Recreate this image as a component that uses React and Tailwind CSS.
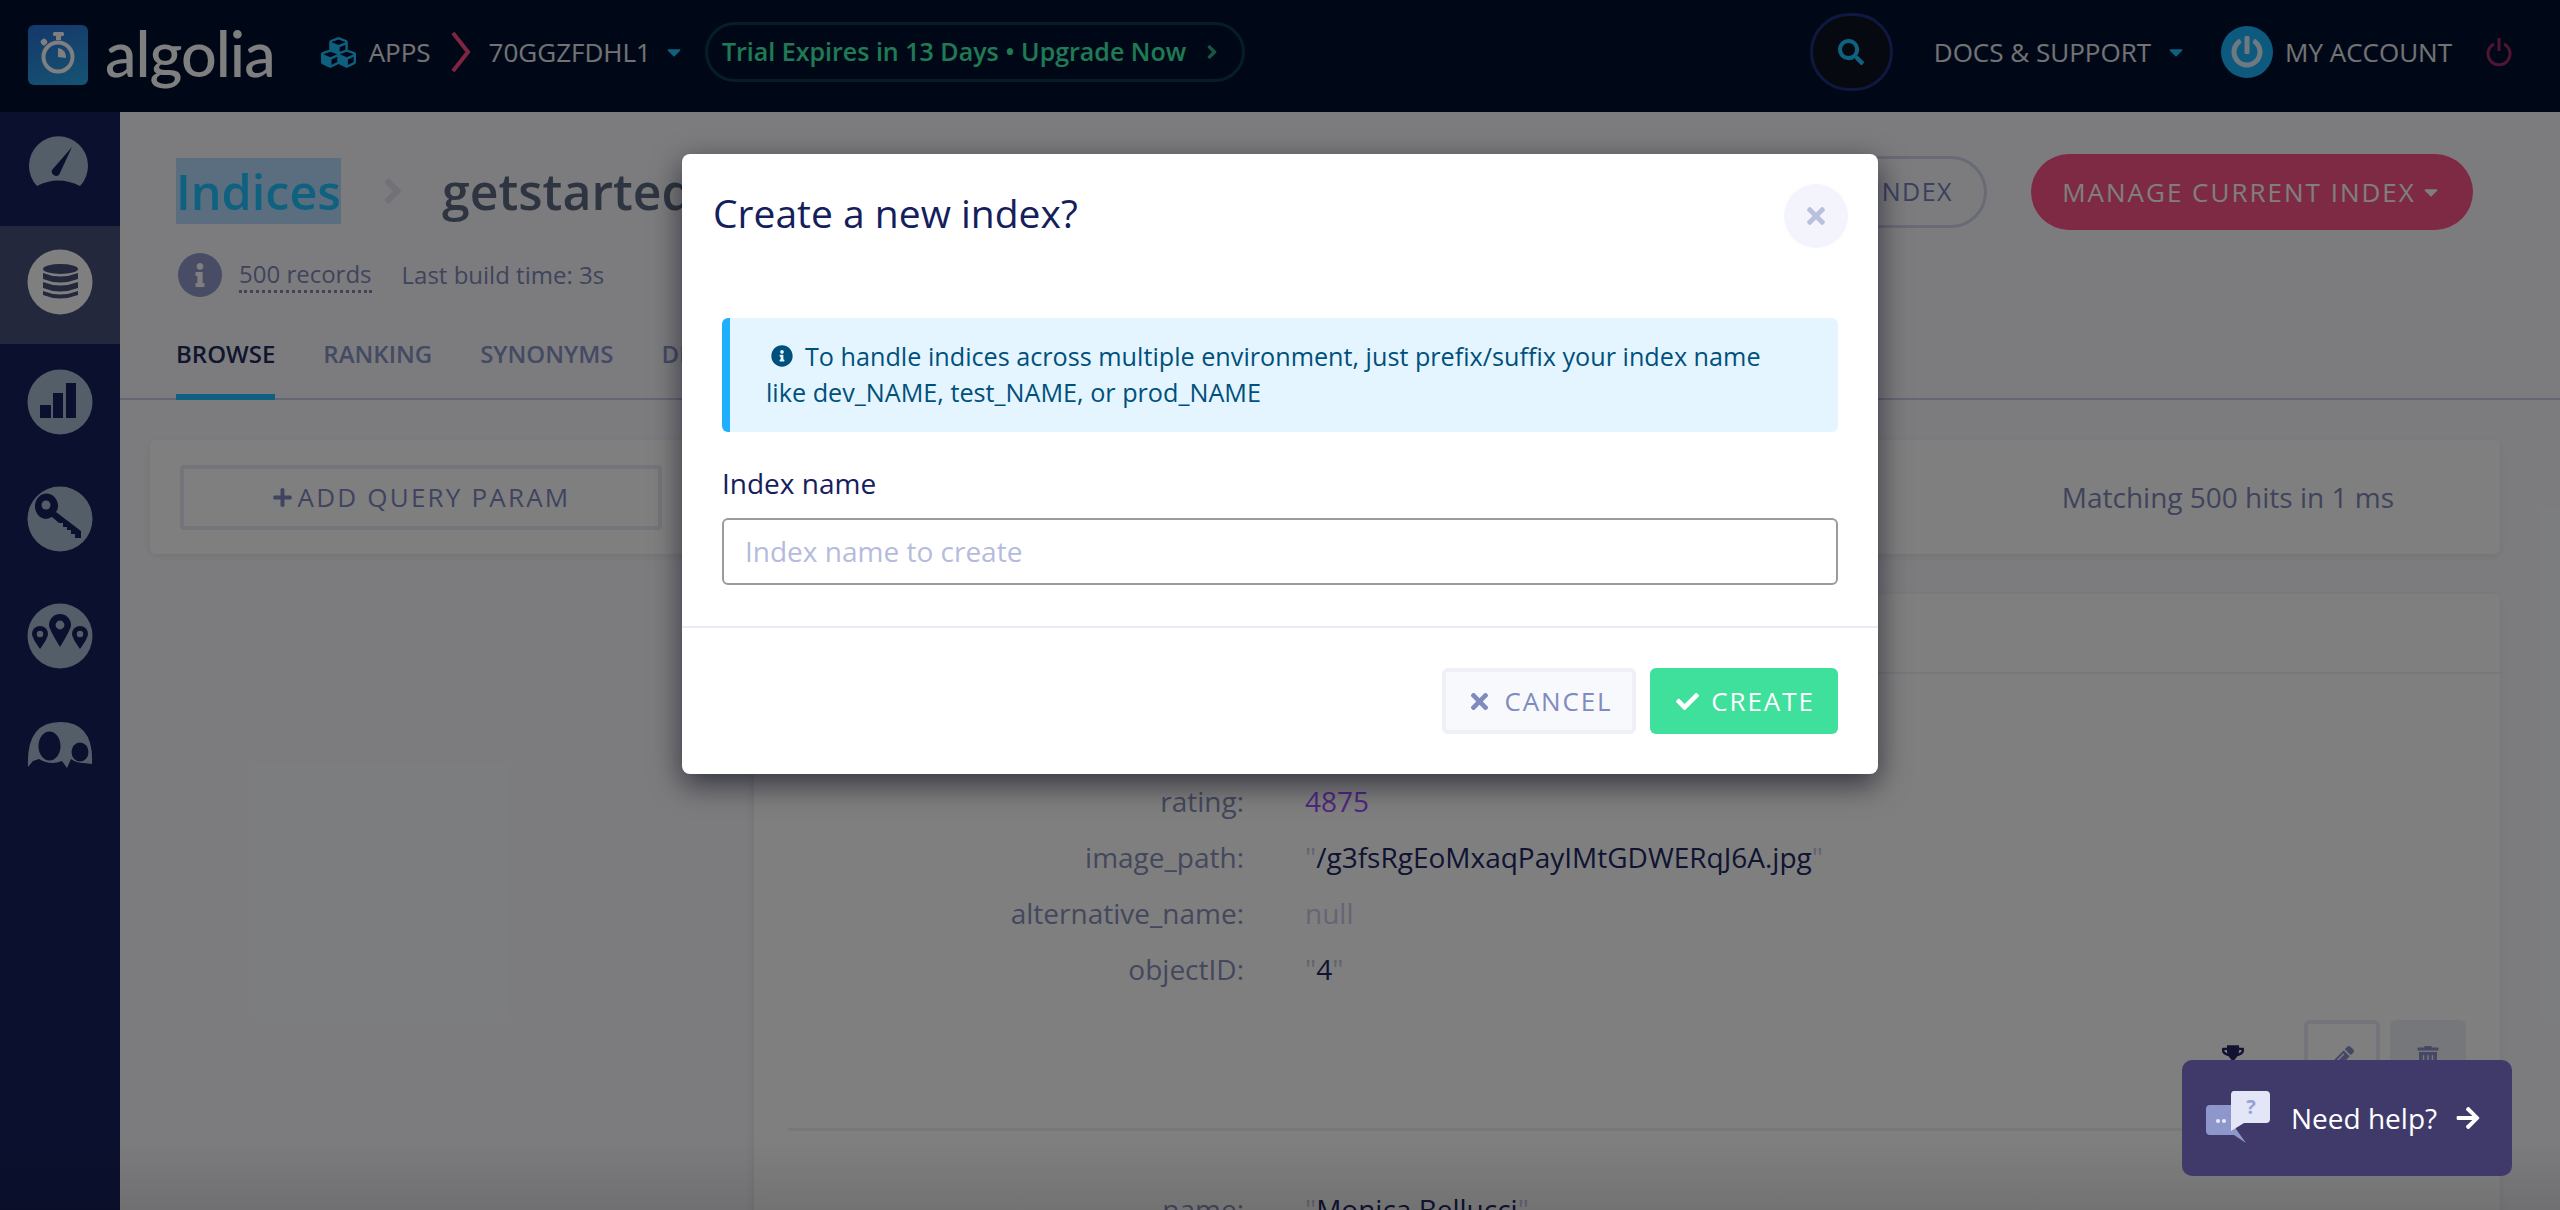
import React from "react";
import { FaCheck, FaTimes, FaPlus, FaInfoCircle, FaInfo, FaCubes, FaSearch, FaTrophy, FaPencilAlt, FaTrashAlt, FaCaretDown, FaAngleRight, FaArrowRight, FaPowerOff } from "react-icons/fa";

const ICON = "#a9bdd0";
const DARK = "#16205c";

function Gauge() {
  return (
    <svg width="64" height="54" viewBox="27 134 64 54" className="block">
      <path d="M37 186 A 29.5 29.5 0 1 1 80 186 Q 58 175 37 186 Z" fill={ICON} />
      <path d="M72 147 L59 175 A 4.5 4.5 0 0 1 52 170 Z" fill={DARK} />
    </svg>
  );
}
function Db() {
  const c = "#485078";
  return (
    <svg width="66" height="66" viewBox="27 249 66 66" className="block">
      <circle cx="60" cy="282" r="32.5" fill="#fff" />
      <ellipse cx="60.5" cy="269" rx="17.5" ry="5" fill={c} />
      <path d="M43 273 Q60 280 78 273 V279 Q60 286 43 279 Z" fill={c} />
      <path d="M43 282 Q60 289 78 282 V288 Q60 295 43 288 Z" fill={c} />
      <path d="M43 291 Q60 298 78 291 V295 Q60 302 43 295 Z" fill={c} />
    </svg>
  );
}
function Bars() {
  return (
    <svg width="66" height="66" viewBox="27 367 66 66" className="block">
      <circle cx="60" cy="400" r="32.5" fill={ICON} />
      <rect x="40" y="403" width="11" height="13" fill={DARK} />
      <rect x="53" y="391" width="10" height="25" fill={DARK} />
      <rect x="66" y="381" width="10" height="35" fill={DARK} />
    </svg>
  );
}
function Key() {
  return (
    <svg width="66" height="66" viewBox="27 485 66 66" className="block">
      <ellipse cx="60" cy="518" rx="32.5" ry="32.5" fill={ICON} />
      <path d="M35 505 A 11.5 12.5 0 0 1 58 505 Q 58 509 56 511 L 81 530 L 81 537 L 75 537 L 75 533 L 71 533 L 71 529 L 67 529 L 67 526 L 63 526 L 63 522 L 59 522 L 52 516 Q 48 518 45 518 A 11.5 12.5 0 0 1 35 505 Z" fill={DARK} />
      <circle cx="46" cy="504" r="4.5" fill={ICON} />
    </svg>
  );
}
function Pin({ x, top, tip, r }) {
  const cy = top + r;
  return (
    <g>
      <path d={`M${x - r} ${cy} A ${r} ${r} 0 1 1 ${x + r} ${cy} Q ${x + r} ${cy + 4} ${x} ${tip} Q ${x - r} ${cy + 4} ${x - r} ${cy} Z`} fill={DARK} />
      <circle cx={x} cy={cy} r={r * 0.4} fill={ICON} />
    </g>
  );
}
function Pins() {
  return (
    <svg width="66" height="66" viewBox="27 601 66 66" className="block">
      <circle cx="60" cy="634" r="32.5" fill={ICON} />
      <Pin x={60} top={612} tip={645} r={11} />
      <Pin x={40} top={624} tip={647} r={8} />
      <Pin x={80} top={624} tip={647} r={8} />
    </svg>
  );
}
function Users() {
  return (
    <svg width="66" height="47" viewBox="27 717 66 47" className="block">
      <path d="M28 763 Q26 718 60 718 Q94 718 92 760 L84 759 Q76 759 71 755 L67 764 L62 757 Q50 762 39 755 L33 757 Z" fill={ICON} />
      <ellipse cx="49.5" cy="742" rx="11" ry="14.5" fill={DARK} />
      <ellipse cx="80" cy="748" rx="8.5" ry="9.5" fill={DARK} />
    </svg>
  );
}
function Stopwatch() {
  return (
    <svg width="60" height="60" viewBox="0 0 60 60" className="block">
      <rect x="25" y="7" width="11" height="4" rx="1.5" fill="#fff" />
      <rect x="28" y="10" width="5" height="5" fill="#fff" />
      <circle cx="30" cy="32" r="14.5" fill="none" stroke="#fff" strokeWidth="4" />
      <rect x="13" y="14" width="6" height="6" rx="2" fill="#fff" transform="rotate(-40 16 17)" />
      <path d="M30 23 A 9 9 0 0 1 38 33 L30 32 Z" fill="#fff" />
    </svg>
  );
}

function Rows({ rows }) {
  return (
    <div className="flex flex-col gap-[20px]">
      {rows.map(([k, v]) => (
        <div key={k} className="flex h-[36px] items-center text-[28px] leading-[36px]">
          <div className="w-[490px] text-right text-[#8890b8]">{k}</div>
          <div className="ml-[61px] whitespace-nowrap">{v}</div>
        </div>
      ))}
    </div>
  );
}
const Q = () => <span className="text-[#c4c8de]">"</span>;
const Str = ({ s }) => (
  <span className="text-[#202864]">
    <Q />
    {s}
    <Q />
  </span>
);

export default function App() {
  return (
    <div className="relative h-[1210px] w-[2560px] overflow-hidden bg-[#f8f9fd] font-['Open_Sans',sans-serif]">
      {/* top bar */}
      <header className="flex h-[112px] items-center bg-[#001130] pb-[8px] text-[26px] text-white">
        <div className="ml-[28px] mt-[6px] flex h-[60px] w-[60px] items-center justify-center rounded-[6px] bg-[linear-gradient(160deg,#2b6fd6,#2aa8e6)]">
          <Stopwatch />
        </div>
        <span className="ml-[17px] font-['Lato',sans-serif] text-[63px] font-medium leading-none tracking-[-1px] text-white">algolia</span>
        <FaCubes className="ml-[46px] text-[#1ebefe]" size={35} />
        <span className="ml-[13px] text-white/90">APPS</span>
        <svg width="24" height="44" viewBox="0 0 24 44" className="ml-[18px]">
          <path d="M4 3 L19 22 L4 41" fill="none" stroke="#ff4a80" strokeWidth="4" />
        </svg>
        <span className="ml-[16px] text-white/90">70GGZFDHL1</span>
        <FaCaretDown className="ml-[12px] text-[#1ebefe]" size={22} />
        <div className="ml-[20px] flex h-[60px] w-[540px] items-center rounded-full border-[3px] border-[#3ee6a0]/20 pl-[14px] text-[25px] font-semibold text-[#3ef4aa]">
          <span className="whitespace-nowrap">Trial Expires in 13 Days • Upgrade Now</span>
          <FaAngleRight className="ml-[15px] opacity-70" size={22} />
        </div>
        <div className="ml-auto flex items-center">
          <div className="flex h-[78px] w-[83px] items-center justify-center rounded-full border-[3px] border-[#1c3080] bg-[#0c1420]">
            <FaSearch className="text-[#20c0ff]" size={26} />
          </div>
          <span className="ml-[41px] whitespace-nowrap text-white/90">DOCS &amp; SUPPORT</span>
          <FaCaretDown className="ml-[14px] text-[#1ebefe]" size={22} />
          <div className="ml-[34px] flex h-[52px] w-[52px] items-center justify-center rounded-full bg-[#1cb4ff]">
            <FaPowerOff className="text-white/85" size={32} />
          </div>
          <span className="ml-[12px] whitespace-nowrap text-white/90">MY ACCOUNT</span>
          <svg width="26" height="30" viewBox="0 0 26 30" fill="none" className="ml-[34px] mr-[48px]">
            <path d="M8 7 A 11 11 0 1 0 18 7" stroke="#a02a60" strokeWidth="3" />
            <path d="M13 1 V14" stroke="#a02a60" strokeWidth="3" />
          </svg>
        </div>
      </header>

      <div className="flex h-[1098px]">
        {/* sidebar */}
        <aside className="flex w-[120px] shrink-0 flex-col bg-[#16205c]">
          <div className="flex h-[114px] items-start justify-center pt-[22px] pr-[2px]"><Gauge /></div>
          <div className="flex h-[118px] items-center justify-center bg-[#485078] pb-[6px]"><Db /></div>
          <div className="flex h-[116px] items-center justify-center"><Bars /></div>
          <div className="flex h-[118px] items-center justify-center"><Key /></div>
          <div className="flex h-[116px] items-center justify-center"><Pins /></div>
          <div className="flex h-[118px] items-center justify-center pb-[18px]"><Users /></div>
        </aside>

        <main className="min-w-0 flex-1">
          {/* page head */}
          <div className="relative h-[288px] border-b-2 border-[#c8cceb]">
            <div className="flex items-start justify-between pl-[56px] pr-[87px] pt-[46px]">
              <div className="flex items-center">
                <span className="flex h-[66px] items-center bg-[#b4dcff] text-[48.5px] font-semibold leading-[66px] text-[#1ec4ff]">Indices</span>
                <FaAngleRight className="ml-[32px] text-[#e0e4f0]" size={40} />
                <span className="ml-[29px] whitespace-nowrap text-[50px] font-semibold leading-[66px] text-[#5c6a80]">getstarted_actors</span>
              </div>
              <div className="-mt-[4px] flex items-center gap-[44px]">
                <div className="flex h-[72px] items-center rounded-full border-[3px] border-[#d0d4ec] pl-[32px] pr-[31px] text-[25px] tracking-[1.5px] text-[#7480c0]">NEW INDEX</div>
                <div className="flex h-[76px] w-[442px] items-center justify-center rounded-full bg-[#fe5488] text-[26px] tracking-[2px] text-white">
                  MANAGE CURRENT INDEX
                  <FaCaretDown className="ml-[4px]" size={22} />
                </div>
              </div>
            </div>
            <div className="mt-[23px] flex items-center pl-[58px] text-[24px] text-[#7f88b8]">
              <span className="flex h-[44px] w-[44px] items-center justify-center rounded-full bg-[#9098c8]">
                <FaInfo className="text-white" size={24} />
              </span>
              <span className="ml-[17px] border-b-[3px] border-dotted border-[#7f88b8] leading-[32px]">500 records</span>
              <span className="ml-[30px]">Last build time: 3s</span>
            </div>
            <div className="absolute bottom-[-2px] left-[56px] flex items-center gap-[48px] text-[24px] font-semibold text-[#8894c8]">
              <span className="border-b-[6px] border-[#20c0ff] pb-[22px] text-[#242a5e]">BROWSE</span>
              <span className="pb-[28px]">RANKING</span>
              <span className="pb-[28px]">SYNONYMS</span>
              <span className="pb-[28px]">DISPLAY</span>
            </div>
          </div>

          {/* query card */}
          <div className="ml-[30px] mt-[40px] flex h-[114px] w-[2350px] items-center justify-between rounded-[6px] bg-white pl-[30px] pr-[106px] shadow-[0_2px_8px_rgba(0,0,0,0.08)]">
            <div className="flex h-[65px] w-[482px] items-center justify-center rounded-[4px] border-[4px] border-[#e8eaf4] text-[26px] tracking-[2.2px] text-[#7f88c0]">
              <FaPlus size={21} className="mr-[5px]" />
              ADD QUERY PARAM
            </div>
            <span className="text-[28px] text-[#7f88b8]">Matching 500 hits in 1 ms</span>
          </div>

          {/* hits card */}
          <div className="ml-[632px] mt-[40px] h-[800px] w-[1748px] rounded-[6px] border-l-2 border-[#eceef4] bg-white shadow-[0_2px_8px_rgba(0,0,0,0.08)]">
            <div className="h-[80px] border-b-2 border-[#eef0f8]" />
            <div className="pt-[109px]">
              <Rows
                rows={[
                  ["rating:", <span className="text-[#a050ff]">4875</span>],
                  ["image_path:", <Str s="/g3fsRgEoMxaqPayIMtGDWERqJ6A.jpg" />],
                  ["alternative_name:", <span className="text-[#c8cce6]">null</span>],
                  ["objectID:", <Str s="4" />],
                ]}
              />
            </div>
            <div className="relative mt-[33px] flex h-[76px] items-center justify-end pr-[34px]">
              <FaTrophy className="mb-[6px] mr-[60px] text-[#202864]" size={22} />
              <div className="mr-[10px] flex h-[76px] w-[76px] items-center justify-center rounded-[6px] border-[4px] border-[#e8eaf4]">
                <FaPencilAlt className="text-[#8890c8]" size={24} />
              </div>
              <div className="flex h-[76px] w-[76px] items-center justify-center rounded-[6px] bg-[#eceef6]">
                <FaTrashAlt className="text-[#8890c8]" size={24} />
              </div>
            </div>
            <div className="ml-[34px] mt-[32px] border-t-[3px] border-[#f0f1f6] pt-[60px]">
              <div className="-ml-[34px]">
                <Rows rows={[["name:", <Str s="Monica Bellucci" />]]} />
              </div>
            </div>
          </div>
        </main>
      </div>

      {/* overlay and modal */}
      <div className="absolute inset-0 flex justify-center bg-black/50 pt-[154px]">
        <div className="absolute bottom-0 left-0 h-[70px] w-full bg-gradient-to-b from-transparent to-black/10" />
        <div className="relative h-[620px] w-[1196px] rounded-[8px] bg-white shadow-[0_10px_30px_rgba(0,0,20,0.6)]">
          <div className="flex h-[156px] items-start justify-between pl-[31px] pr-[30px] pt-[30px]">
            <h2 className="text-[39px] leading-[58px] text-[#14205c]">Create a new index?</h2>
            <button className="flex h-[64px] w-[64px] items-center justify-center rounded-full bg-[#f4f5fc] text-[#b9c0de]">
              <FaTimes size={26} />
            </button>
          </div>
          <div className="mx-[40px] mt-[8px] flex h-[114px] flex-col justify-center rounded-[6px] border-l-[8px] border-[#1eb0ff] bg-[#e5f5ff] pb-[2px] pl-[36px] text-[25.2px] leading-[36px] text-[#00507c]">
            <div className="flex items-center whitespace-nowrap">
              <FaInfoCircle size={22} className="ml-[5px] mr-[12px]" />
              To handle indices across multiple environment, just prefix/suffix your index name
            </div>
            <div>like dev_NAME, test_NAME, or prod_NAME</div>
          </div>
          <label className="mx-[40px] mt-[32px] block text-[28px] leading-[38px] text-[#14205c]">Index name</label>
          <input
            readOnly
            placeholder="Index name to create"
            className="mx-[40px] mt-[16px] block h-[67px] w-[1116px] rounded-[6px] border-2 border-[#9b9b9b] bg-white px-[21px] pb-[2px] text-[28px] placeholder:text-[#b5bbdc]"
          />
          <div className="mt-[41px] flex h-[147px] items-start justify-end gap-[14px] border-t-2 border-[#e8ecf3] pr-[40px] pt-[40px] text-[26px] tracking-[1.9px]">
            <button className="flex h-[66px] w-[194px] items-center justify-center rounded-[6px] border-[4px] border-[#eff0f7] bg-[#f8f9fc] pl-[2px] text-[#7f8bc0]">
              <FaTimes size={25} className="mr-[12px]" />
              CANCEL
            </button>
            <button className="flex h-[66px] w-[188px] items-center justify-center rounded-[6px] bg-[#3ee09c] pl-[3px] text-white">
              <FaCheck size={23} className="mr-[12px]" />
              CREATE
            </button>
          </div>
        </div>
      </div>

      {/* help */}
      <div className="absolute left-[2182px] top-[1060px] flex h-[116px] w-[330px] items-center rounded-[10px] bg-[#403a6b] pl-[24px] text-[28px] text-white">
        <svg width="66" height="54" viewBox="0 0 66 54" className="shrink-0">
          <path d="M4 14 H30 V38 L40 52 L28 44 H4 Q0 44 0 40 V18 Q0 14 4 14 Z" fill="#8d97cb" />
          <circle cx="12" cy="30" r="2" fill="#e7eaf7" />
          <circle cx="18" cy="30" r="2" fill="#e7eaf7" />
          <path d="M28 0 H60 Q64 0 64 4 V28 Q64 32 60 32 H38 L25 40 V4 Q25 0 28 0 Z" fill="#e3e6f6" />
          <text x="45" y="23" textAnchor="middle" fontSize="20" fontWeight="700" fill="#98a2d6">?</text>
        </svg>
        <span className="ml-[19px] whitespace-nowrap">Need help?</span>
        <FaArrowRight className="ml-[18px]" size={26} />
      </div>
    </div>
  );
}
